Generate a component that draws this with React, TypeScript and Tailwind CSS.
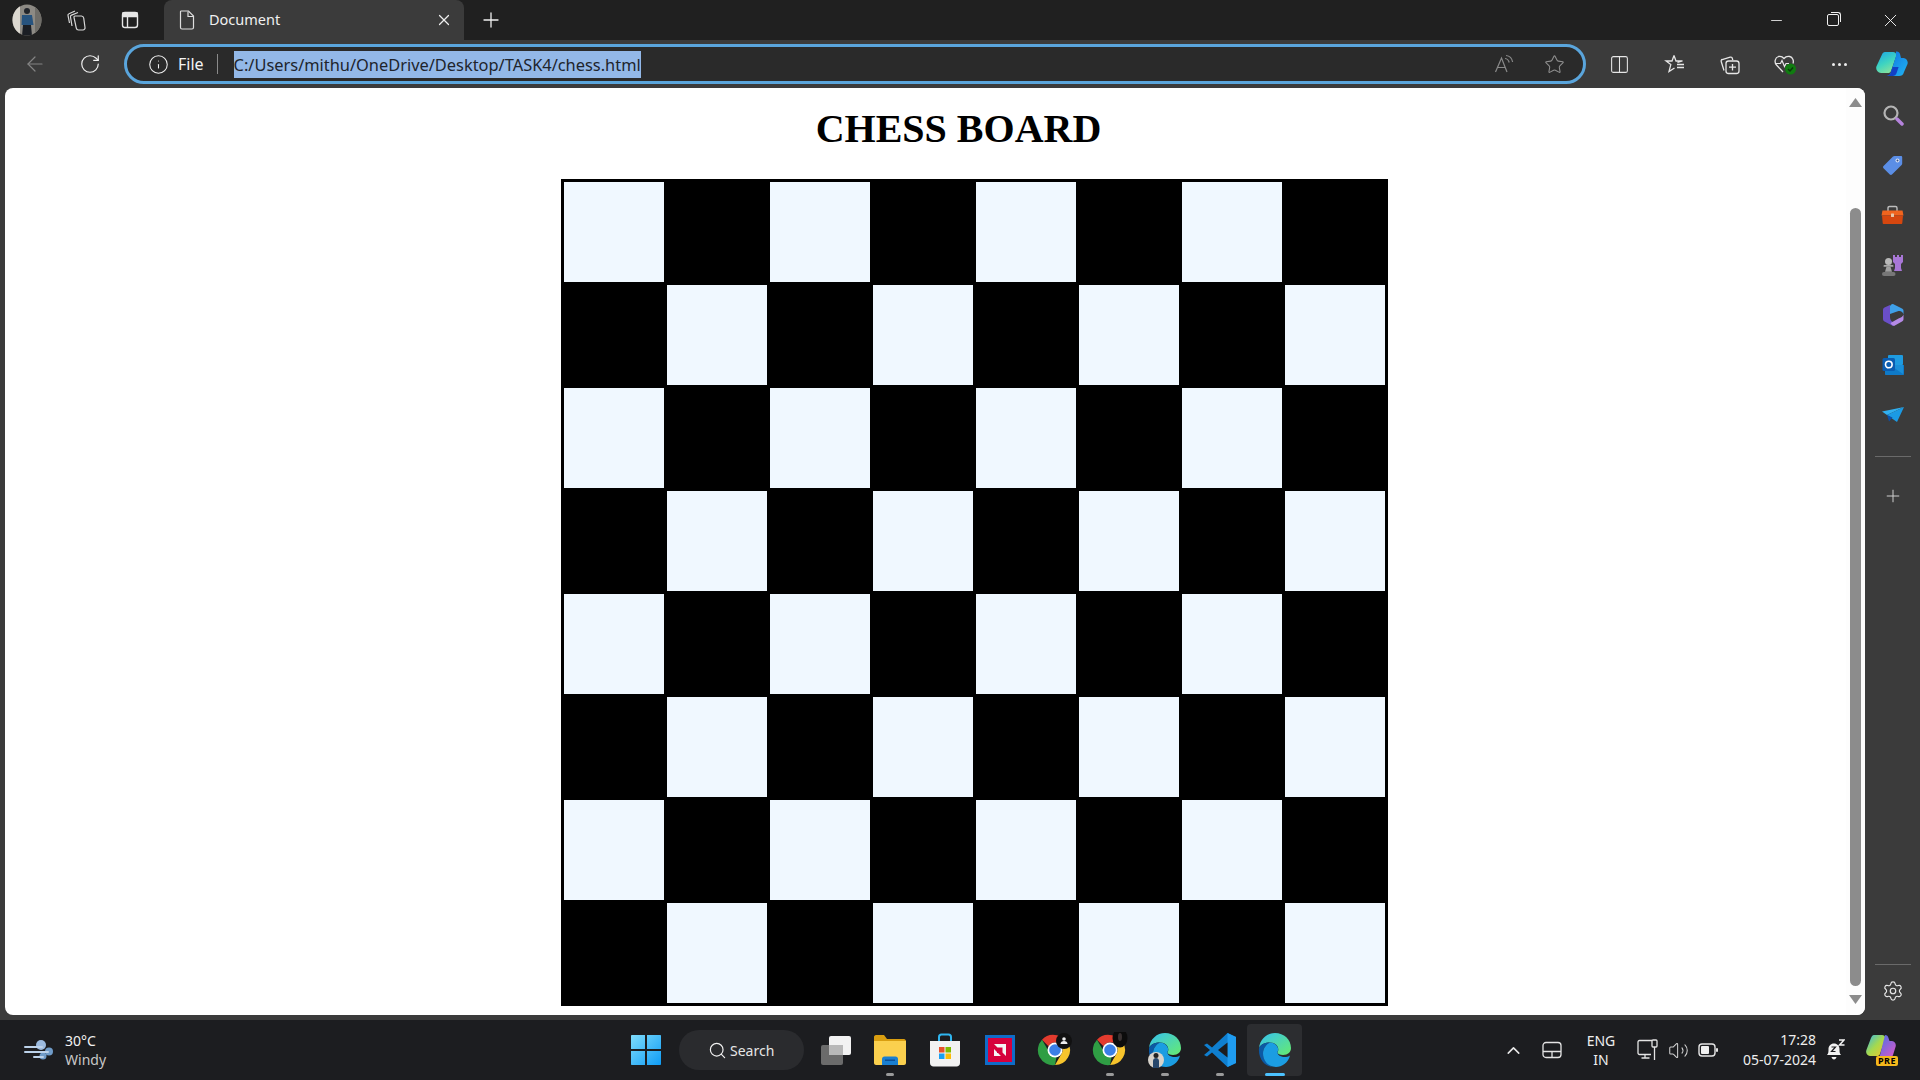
import { ReactNode } from "react";
import { Search, X, Plus, Minus, ArrowLeft, RotateCw, Info, Star, Columns2, Settings, ChevronUp, Volume2 } from "lucide-react";

const rows = [0, 1, 2, 3, 4, 5, 6, 7];

function Slot({ className, children }: { className: string; children?: ReactNode }) {
  return <div className={`flex shrink-0 items-center justify-center ${className}`}>{children}</div>;
}

function Avatar() {
  return (
    <svg width="30" height="32" viewBox="0 0 30 32">
      <defs>
        <clipPath id="av"><ellipse cx="15" cy="16" rx="14.500" ry="15.500" /></clipPath>
      </defs>
      <g clipPath="url(#av)">
        <rect width="30" height="32" fill="#8d8a84" />
        <rect x="0" y="0" width="8" height="32" fill="#dcd8d0" />
        <rect x="23" y="0" width="7" height="32" fill="#6f6d68" />
        <circle cx="15" cy="7" r="3" fill="#22252b" />
        <path d="M10 11h10l1.500 10h-12z" fill="#27537e" />
        <path d="M11 21h8l1 11h-10z" fill="#1b1e24" />
      </g>
    </svg>
  );
}

function Workspaces() {
  return (
    <svg width="22" height="24" viewBox="0 0 22 24" fill="none" stroke="#d8d8d8" strokeWidth="1.200">
      <path d="M3.500 15 2 7.500c-.2-.8.2-1.500 1-1.800L9 3" />
      <path d="M6 18 4.500 9c-.2-.9.2-1.600 1-1.900L12 4.500" />
      <path d="M9 8h6.500c1.200 0 2 .8 2.200 2l1.300 9.500c.2 1.300-.7 2.500-2 2.500h-4.500c-1.100 0-2-.7-2.200-1.800L8 9.500C7.900 8.600 8.300 8 9 8z" />
    </svg>
  );
}

function VerticalTabs() {
  return (
    <svg width="20" height="20" viewBox="0 0 20 20" fill="none" stroke="#e6e6e6" strokeWidth="1.400">
      <rect x="2.500" y="2.500" width="15" height="15" rx="2.500" />
      <path d="M3 3h14v3.500H3z" fill="#e6e6e6" />
      <path d="M7.500 6.500v11" />
    </svg>
  );
}

function FileIcon() {
  return (
    <svg width="18" height="22" viewBox="0 0 18 22" fill="none" stroke="#dedede" strokeWidth="1.200">
      <path d="M3 2h7.500L15.500 7v11.500c0 .9-.7 1.500-1.500 1.500H4c-.9 0-1.500-.6-1.500-1.500V3C2.500 2.400 2.600 2 3 2z" />
      <path d="M10 2.500V7.500h5.500" />
    </svg>
  );
}

function ReadAloud() {
  return (
    <svg width="22" height="20" viewBox="0 0 22 20" fill="none" stroke="#8a8a8a" strokeWidth="1.200">
      <path d="M1.500 18 7.500 4l5.500 14M3.500 13.500h8" />
      <path d="M11 4.500c2.200.3 3.700 1.700 4.200 4M12 1.500c3.500.4 6 3 6.600 6.500" />
    </svg>
  );
}

function Favorites() {
  return (
    <svg width="22" height="22" viewBox="0 0 22 22" fill="none" stroke="#e6e6e6" strokeWidth="1.300">
      <path d="M10 2.500 12 8h6.500l-5 1.500M10 2.500 8 8H2l4.800 3.600L5 18.500l5.500-3.500" />
      <path d="M13 11.500h7M13 14.500h7" />
    </svg>
  );
}

function Collections() {
  return (
    <svg width="22" height="22" viewBox="0 0 22 22" fill="none" stroke="#e6e6e6" strokeWidth="1.300">
      <path d="M5 17.500 2.200 8.500c-.3-1 .2-1.800 1-2l8-2.300c1-.3 1.800.2 2.100 1.200l.5 1.800" />
      <rect x="7" y="8" width="13" height="12.500" rx="2.500" fill="#3b3b3b" />
      <path d="M13.500 11v6.500M10 14.200h7" />
    </svg>
  );
}

function Health() {
  return (
    <svg width="24" height="24" viewBox="0 0 24 24" fill="none">
      <path d="M10 20 3.500 13C1 10.200 2 5.500 5.500 4.500c2-.5 4 .2 5.500 2 1.500-1.800 3.700-2.500 5.700-2 3 .8 4.300 4 3.300 7" stroke="#e6e6e6" strokeWidth="1.300" />
      <path d="M3 11.500h4.500l1.500-3 2.500 6 1.500-3h3" stroke="#e6e6e6" strokeWidth="1.200" />
      <circle cx="17.500" cy="17" r="5.500" fill="#107c10" />
      <path d="m15 17 2 2 3-3.500" stroke="#0b3a0b" strokeWidth="1.500" />
    </svg>
  );
}

function Copilot() {
  return (
    <svg width="32" height="28" viewBox="0 0 32 28">
      <defs>
        <linearGradient id="cpa" x1="0" y1="0" x2="0.500" y2="1">
          <stop offset="0" stopColor="#1aa3e8" />
          <stop offset="0.600" stopColor="#3fd4c0" />
          <stop offset="1" stopColor="#7fe0a0" />
        </linearGradient>
        <linearGradient id="cpb" x1="0" y1="0" x2="1" y2="1">
          <stop offset="0" stopColor="#0f6fe0" />
          <stop offset="1" stopColor="#21b5f2" />
        </linearGradient>
      </defs>
      <path d="M9 2h8c2 0 3 1 3.600 3L15 21c-.6 1.500-1.500 2-3 2H5c-3.500-.6-5.500-3.500-4.600-6.500L6 4.500C6.500 3 7.500 2 9 2z" fill="url(#cpa)" />
      <path d="M20 1.500c2-.4 3.500.7 4 2.500l1 4h2.500c3 .4 4.800 3 4 6L28 22c-.8 3-2.500 4-5 4H11c1.500-.3 3-1 3.600-3L20 6z" fill="url(#cpb)" />
      <path d="M10 26c2 0 4-1 4.600-3l2-6h6l-2 6c-.6 2-2 3-4 3z" fill="#1240c4" />
    </svg>
  );
}

function Magnifier() {
  return (
    <svg width="22" height="22" viewBox="0 0 22 22" fill="none">
      <circle cx="9" cy="9" r="6.500" stroke="#b4b4b4" strokeWidth="2.200" />
      <path d="m15 15 5 5" stroke="#b583dd" strokeWidth="3.500" strokeLinecap="round" />
    </svg>
  );
}

function TagIcon() {
  return (
    <svg width="22" height="22" viewBox="0 0 22 22">
      <path d="M1.500 12 11 2.500c.4-.4 1-.6 1.500-.6H19c.7 0 1.200.5 1.200 1.200v6.500c0 .6-.2 1.100-.6 1.500L10 20.500c-.6.600-1.600.600-2.200 0L1.500 14.200c-.6-.6-.6-1.600 0-2.200z" fill="#5b8ee6" />
      <circle cx="15.500" cy="6.500" r="2" fill="#dfe8f8" />
      <circle cx="15.500" cy="6.500" r="1" fill="#37518a" />
    </svg>
  );
}

function Toolbox() {
  return (
    <svg width="23" height="20" viewBox="0 0 23 20">
      <path d="M7 6V3c0-1 .6-1.500 1.500-1.500h6c.9 0 1.500.5 1.500 1.500v3" fill="none" stroke="#bdbdbd" strokeWidth="1.400" />
      <path d="M1.500 5.500h20l1 5H.500z" fill="#f0641e" />
      <path d="M1 10.500h21l-.7 7.500c0 .6-.5 1-1.100 1H2.800c-.6 0-1.100-.4-1.100-1z" fill="#d6470f" />
      <rect x="10" y="8.500" width="3" height="3.500" rx="0.500" fill="#e6c6a8" />
    </svg>
  );
}

function ChessPieces() {
  return (
    <svg width="24" height="24" viewBox="0 0 24 24">
      <path d="M12 2h2v2h2V2h2v2h2V2h2v7l-2 2v4l1 3H13l1-3v-4l-2-2z" fill="#a877d6" />
      <circle cx="7.500" cy="8.500" r="3.500" fill="#b8b8b8" />
      <rect x="2.500" y="12" width="10" height="1.800" rx="0.900" fill="#a8a8a8" />
      <path d="M5.500 13.800h4l1.500 5H4z" fill="#a0a0a0" />
      <rect x="1" y="19" width="13.500" height="4" rx="2" fill="#777" />
    </svg>
  );
}

function M365() {
  return (
    <svg width="22" height="24" viewBox="0 0 22 24">
      <path d="M11 1 20 5.500c1 .6 1.500 1.500 1.500 2.500v3.500c-.6-2.500-2.500-4-5-3.500L8 11V3c1-1.500 2-2.300 3-2z" fill="#3fa0e8" />
      <path d="M1 7c0-1 .5-2 1.500-2.500L8 2v12c0 3 1.500 5 4.500 6L11 23 2.500 18.500C1.500 18 1 17 1 16z" fill="#6a4fc8" />
      <path d="M21.500 11.500V16c0 1-.5 2-1.500 2.500L12 23c-1.500-.6-3-1.500-3.500-3l8-4.500c2.500-1 4.500-2 5-4z" fill="#b58ae6" />
    </svg>
  );
}

function Outlook() {
  return (
    <svg width="22" height="22" viewBox="0 0 22 22">
      <rect x="6" y="1" width="15" height="10" rx="1" fill="#1e9be0" />
      <path d="M3 11h19v9c0 .6-.4 1-1 1H4c-.6 0-1-.4-1-1z" fill="#0f7ac8" />
      <path d="M8 11h13v9z" fill="#1a8fd8" />
      <rect x="0.500" y="4" width="12.500" height="13" rx="1.500" fill="#0a5cb0" />
      <circle cx="6.800" cy="10.500" r="3.300" fill="none" stroke="#fff" strokeWidth="1.600" />
    </svg>
  );
}

function SendIcon() {
  return (
    <svg width="22" height="16" viewBox="0 0 22 16">
      <path d="M0 4.500 22 0 5 8z" fill="#31b0f0" />
      <path d="M5 8 22 0 15 15z" fill="#1b9ae4" />
      <path d="M5 8 7 14.500 10.500 10.500z" fill="#0c4fa8" />
    </svg>
  );
}

function WindIcon() {
  return (
    <svg width="30" height="24" viewBox="0 0 30 24">
      <circle cx="17" cy="7" r="5" fill="#9cbbe0" />
      <circle cx="25" cy="13.500" r="4" fill="#6f9bc8" />
      <circle cx="19" cy="18" r="3.500" fill="#6f9bc8" />
      <path d="M1 9h17M1 14h23M10 19h9" stroke="#bcd2ea" strokeWidth="2" strokeLinecap="round" />
    </svg>
  );
}

function WindowsLogo() {
  return (
    <svg width="30" height="30" viewBox="0 0 30 30">
      <defs>
        <linearGradient id="win" x1="0" y1="0" x2="1" y2="1">
          <stop offset="0" stopColor="#7fdcfb" />
          <stop offset="1" stopColor="#0f9cf5" />
        </linearGradient>
      </defs>
      <path d="M0 1c0-.6.4-1 1-1h13v14H0zM16 0h13c.6 0 1 .4 1 1v13H16zM0 16h14v14H1c-.6 0-1-.4-1-1zM16 16h14v13c0 .6-.4 1-1 1H16z" fill="url(#win)" />
    </svg>
  );
}

function TaskView() {
  return (
    <svg width="32" height="30" viewBox="0 0 32 30">
      <rect x="1" y="10" width="22" height="20" rx="2" fill="#6b6b6b" />
      <rect x="9" y="1" width="22" height="19" rx="2" fill="#f2f2f2" />
      <rect x="9" y="10" width="14" height="10" fill="#b8b8b8" />
    </svg>
  );
}

function Explorer() {
  return (
    <svg width="32" height="30" viewBox="0 0 32 30">
      <path d="M0 2c0-1 .8-2 2-2h8l3 4h17c1 0 2 1 2 2v2H0z" fill="#d99e10" />
      <path d="M0 6h32v22c0 1-1 2-2 2H2c-1 0-2-1-2-2z" fill="#fbd04e" />
      <path d="M8 30v-6c0-1.500 1-2.500 2.500-2.500h11c1.500 0 2.500 1 2.500 2.500v6z" fill="#1a7fd0" />
      <rect x="11" y="24.500" width="10" height="1.500" fill="#0c4f96" />
    </svg>
  );
}

function StoreIcon() {
  return (
    <svg width="30" height="34" viewBox="0 0 30 34">
      <path d="M9 8V4c0-1.500 1-2.500 2.500-2.500h7C20 1.500 21 2.500 21 4v4" fill="none" stroke="#2fb6f0" strokeWidth="2" />
      <path d="M0 8h30v22c0 2-1.500 3.500-3.500 3.500h-23C1.500 33.500 0 32 0 30z" fill="#f2f2f2" />
      <rect x="9" y="14" width="5.500" height="5.500" fill="#e8502a" />
      <rect x="15.500" y="14" width="5.500" height="5.500" fill="#7fba00" />
      <rect x="9" y="20.500" width="5.500" height="5.500" fill="#1a9ff0" />
      <rect x="15.500" y="20.500" width="5.500" height="5.500" fill="#fbbc09" />
    </svg>
  );
}

function AmdIcon() {
  return (
    <svg width="30" height="30" viewBox="0 0 30 30">
      <rect width="30" height="30" fill="#0f6cc8" />
      <rect x="3" y="3" width="24" height="24" fill="#d6003c" />
      <path d="M9 9h12v12l-3.500-3.500V12.500H12.500zM9 21v-7l3 3v1h1l3 3z" fill="#f4f4f4" />
    </svg>
  );
}

function Chrome({ badge }: { badge: "person" | "photo" }) {
  return (
    <svg width="36" height="36" viewBox="0 0 36 36">
      <path d="M18 3a15 15 0 0 1 13 7.500H18a7.500 7.500 0 0 0-6.500 3.800L5 7.800A15 15 0 0 1 18 3z" fill="#e33b2e" />
      <path d="M31 10.500A15 15 0 0 1 18 33l6.500-11.200A7.500 7.500 0 0 0 24.500 14z" fill="#f7c42c" />
      <path d="M5 7.800 11.500 19a7.500 7.500 0 0 0 8.500 3.600L18 33A15 15 0 0 1 5 7.800z" fill="#2f9e44" />
      <circle cx="18" cy="18" r="7.500" fill="#fff" />
      <circle cx="18" cy="18" r="5.800" fill="#3b7fe6" />
      {badge === "person" ? (
        <g>
          <circle cx="27" cy="9" r="8" fill="#111" />
          <circle cx="27" cy="7" r="1.800" fill="#eee" />
          <path d="M23.500 12c0-2 1.500-3 3.500-3s3.500 1 3.500 3z" fill="#eee" />
        </g>
      ) : (
        <g>
          <ellipse cx="28" cy="6" rx="7.500" ry="9.500" fill="#0c0c0c" />
          <ellipse cx="28" cy="5" rx="2" ry="4" fill="#3a3232" />
        </g>
      )}
    </svg>
  );
}

function EdgeLogo({ profile }: { profile?: boolean }) {
  return (
    <svg width="34" height="36" viewBox="0 0 34 36">
      <defs>
        <linearGradient id={profile ? "eg1" : "eg3"} x1="0" y1="0" x2="1" y2="1">
          <stop offset="0" stopColor="#35c1f1" />
          <stop offset="1" stopColor="#66eb6e" />
        </linearGradient>
      </defs>
      <path d="M1 16C2 7 9 1 17 1c9 0 16 6.500 16 15 0 4-3 7-8 7-3 0-5.500-1-5.500-2.500 0-.7.8-1.200.8-3 0-4-3.500-7-7.800-7C7 10.500 3 12 1 16z" fill={`url(#${profile ? "eg1" : "eg3"})`} />
      <path d="M1 16c2-4 6-5.500 11-5.500-4 2-7 6-7 11 0 6 4.500 11 10 13.500C7 35 0 27 1 16z" fill="#0c59a4" />
      <path d="M12 10.500c4.300 0 7.800 3 8.300 7-.5 1.800-.8 2.300-.8 3 0 3 4 4.500 7 4.500 2 0 4-.5 5.500-1.500C30 31 24 35 18 35c-7.500 0-13-6-13-13.500 0-5 3-9 7-11z" fill="#1b9de2" />
      {profile && (
        <g>
          <circle cx="8" cy="28" r="8" fill="#d7d3cb" />
          <path d="M5 36v-7c0-2 1.500-3 3-3s3 1 3 3v7z" fill="#27476b" />
          <circle cx="8" cy="23.500" r="2.500" fill="#222" />
        </g>
      )}
    </svg>
  );
}

function VsCode() {
  return (
    <svg width="32" height="34" viewBox="0 0 32 34">
      <path d="M23.500 0 32 4v26l-8.500 4L8 19.500l-5 4L0 22l6-5-6-5 3-1.500 5 4z" fill="#0f7fd0" />
      <path d="M23.500 0 32 4v26l-8.500 4z" fill="#1f9cf0" />
      <path d="M23.500 9.500v15L14 17z" fill="#1c1c1f" />
    </svg>
  );
}

function Touchpad() {
  return (
    <svg width="20" height="18" viewBox="0 0 20 18" fill="none" stroke="#e4e4e4" strokeWidth="1.300">
      <rect x="1" y="1.500" width="18" height="15" rx="3" />
      <path d="M1 10.500h18M10 10.500v6" />
    </svg>
  );
}

function NetIcon() {
  return (
    <svg width="22" height="22" viewBox="0 0 22 22" fill="none" stroke="#e4e4e4" strokeWidth="1.300">
      <path d="M14 15.500H2.500c-.8 0-1.500-.6-1.500-1.500V3c0-.8.6-1.500 1.500-1.500H15" />
      <path d="M8 15.500v3M4.500 19h8" />
      <rect x="15" y="1" width="5" height="7" rx="1" />
      <path d="M17.500 8v13" />
    </svg>
  );
}

function BatteryIcon() {
  return (
    <svg width="20" height="14" viewBox="0 0 20 14">
      <rect x="1" y="1" width="16" height="12" rx="3" fill="none" stroke="#e4e4e4" strokeWidth="1.400" />
      <rect x="3" y="3" width="8" height="8" rx="1" fill="#f0f0f0" />
      <rect x="18" y="5" width="2" height="4" rx="1" fill="#e4e4e4" />
    </svg>
  );
}

function BellZ() {
  return (
    <svg width="20" height="22" viewBox="0 0 20 22">
      <path d="M2 16c1.500-1.500 1.500-3 1.500-6 0-3 2.200-5.500 5.500-5.500S14.500 7 14.500 10c0 3 0 4.500 1.500 6z" fill="#f2f2f2" />
      <path d="M6.500 18h5c-.3 1.500-1.300 2.500-2.500 2.500S6.800 19.500 6.500 18z" fill="#f2f2f2" />
      <path d="M6.500 8h4l-4 4.500h4" fill="none" stroke="#1c1c1f" strokeWidth="1.200" />
      <path d="M14 1h5l-4.500 5h5" fill="none" stroke="#f2f2f2" strokeWidth="1.500" />
    </svg>
  );
}

function CopilotPre() {
  return (
    <div className="relative h-[32px] w-[30px]">
      <svg width="30" height="26" viewBox="0 0 30 26">
        <defs>
          <linearGradient id="cpp" x1="0" y1="0" x2="1" y2="1">
            <stop offset="0" stopColor="#33b7ea" />
            <stop offset="0.500" stopColor="#a5d94e" />
            <stop offset="1" stopColor="#f0c52c" />
          </linearGradient>
          <linearGradient id="cpq" x1="0" y1="0" x2="1" y2="1">
            <stop offset="0" stopColor="#3a74e8" />
            <stop offset="1" stopColor="#e356c8" />
          </linearGradient>
        </defs>
        <path d="M8 1h8c2 0 3 1 3.500 3L14 20c-.6 1.500-1.500 2-3 2H4C1 21.500-.6 19 .4 16L5 4c.5-1.500 1.500-3 3-3z" fill="url(#cpp)" />
        <path d="M19 1c2 0 3 1 3.500 3l1 3h2.500c3 .4 4.500 3 3.500 6L27 21c-.8 2-2 3-4 3H11c1.500-.3 2.500-1 3-3z" fill="url(#cpq)" />
      </svg>
      <span className="absolute -right-[2px] bottom-0 rounded-[2px] bg-[#f5b81c] px-[2px] text-[9px] font-bold leading-[10px] tracking-[0.5px] text-black">
        PRE
      </span>
    </div>
  );
}

function TitleBar() {
  return (
    <div className="flex h-10 shrink-0 items-center bg-[#202020] text-white">
      <Slot className="w-[54px]"><Avatar /></Slot>
      <Slot className="w-[46px]"><Workspaces /></Slot>
      <Slot className="w-[60px]"><VerticalTabs /></Slot>
      <div className="ml-1 flex h-10 w-[300px] items-center rounded-t-[8px] bg-[#3b3b3b]">
        <Slot className="ml-[9px] w-[28px]"><FileIcon /></Slot>
        <span className="ml-[8px] flex-1 text-[14.5px] text-[#f0f0f0]">Document</span>
        <Slot className="mr-[10px] w-[20px]"><X size={18} strokeWidth={1.6} color="#eeeeee" /></Slot>
      </div>
      <Slot className="w-[54px]"><Plus size={24} strokeWidth={1.3} color="#f0f0f0" /></Slot>
      <div className="flex-1" />
      <Slot className="w-[57px]"><Minus size={17} strokeWidth={1.2} color="#f0f0f0" /></Slot>
      <Slot className="w-[56px]">
        <div className="relative h-[12px] w-[12px] rounded-[2px] border border-[#f0f0f0]">
          <div className="absolute -right-[3px] -top-[3px] h-[10px] w-[10px] rounded-tr-[3px] border-r border-t border-[#f0f0f0]" />
        </div>
      </Slot>
      <Slot className="w-[59px]"><X size={21} strokeWidth={1.1} color="#f0f0f0" /></Slot>
    </div>
  );
}

function ToolBar() {
  return (
    <div className="flex h-12 shrink-0 items-center bg-[#3b3b3b] text-white">
      <Slot className="w-[70px]"><ArrowLeft size={24} strokeWidth={1.2} color="#848484" /></Slot>
      <Slot className="w-[40px]"><RotateCw size={22} strokeWidth={1.3} color="#f0f0f0" /></Slot>
      <div className="ml-[14px] flex h-[40px] w-[1462px] items-center rounded-full border-[3px] border-[#5aa5dc] bg-[#2a2a2a]">
        <Slot className="ml-[20px] w-[22px]"><Info size={21} strokeWidth={1.2} color="#f0f0f0" /></Slot>
        <span className="ml-[9px] text-[16px] text-[#f4f4f4]">File</span>
        <div className="ml-[13px] h-[20px] w-px bg-[#8a8a8a]" />
        <span className="ml-[16px] bg-[#93b8e8] text-[16.4px] leading-[27px] text-[#20242c]">C:/Users/mithu/OneDrive/Desktop/TASK4/chess.html</span>
        <div className="flex-1" />
        <Slot className="mr-[20px] w-[30px]"><ReadAloud /></Slot>
        <Slot className="mr-[15px] w-[28px]"><Star size={21} strokeWidth={1.2} color="#8f8f8f" /></Slot>
      </div>
      <Slot className="w-[66px]"><Columns2 size={21} strokeWidth={1.2} color="#e6e6e6" /></Slot>
      <Slot className="w-[46px]"><Favorites /></Slot>
      <Slot className="w-[64px]"><Collections /></Slot>
      <Slot className="w-[46px]"><Health /></Slot>
      <Slot className="w-[62px] gap-[3px]">
        <span className="h-[3px] w-[3px] rounded-full bg-[#eeeeee]" />
        <span className="h-[3px] w-[3px] rounded-full bg-[#eeeeee]" />
        <span className="h-[3px] w-[3px] rounded-full bg-[#eeeeee]" />
      </Slot>
      <Slot className="w-[44px]"><Copilot /></Slot>
    </div>
  );
}

function Board() {
  return (
    <div className="ml-[556px] grid w-fit grid-cols-[repeat(8,100px)] gap-[3px] bg-black p-[3px]">
      {rows.map((r) =>
        rows.map((c) => (
          <div key={`${r}-${c}`} className={(r + c) % 2 === 0 ? "h-[100px] bg-[#f0f8ff]" : "h-[100px] bg-black"} />
        ))
      )}
    </div>
  );
}

function Scrollbar() {
  return (
    <div className="flex w-[19px] shrink-0 flex-col items-center bg-[#fdfdfd]">
      <svg className="mt-[10px]" width="13" height="9" viewBox="0 0 13 9"><path d="M6.500 0 13 9H0z" fill="#8c8c8c" /></svg>
      <div className="mt-[101px] h-[778px] w-[11px] rounded-full bg-[#8c8c8c]" />
      <svg className="mt-[9px]" width="13" height="9" viewBox="0 0 13 9"><path d="M0 0h13L6.500 9z" fill="#8c8c8c" /></svg>
    </div>
  );
}

function SideBar() {
  return (
    <div className="flex w-[55px] shrink-0 flex-col items-center pt-[2px]">
      <Slot className="h-[50px]"><Magnifier /></Slot>
      <Slot className="h-[50px]"><TagIcon /></Slot>
      <Slot className="h-[50px]"><Toolbox /></Slot>
      <Slot className="h-[50px]"><ChessPieces /></Slot>
      <Slot className="h-[50px]"><M365 /></Slot>
      <Slot className="h-[50px]"><Outlook /></Slot>
      <Slot className="h-[50px]"><SendIcon /></Slot>
      <div className="mt-[16px] h-px w-[36px] bg-[#6a6a6a]" />
      <Slot className="mt-[14px] h-[50px]"><Plus size={20} strokeWidth={1.2} color="#cfcfcf" /></Slot>
      <div className="mt-auto h-px w-[36px] bg-[#6a6a6a]" />
      <Slot className="mt-[2px] h-[48px]"><Settings size={22} strokeWidth={1.3} color="#e6e6e6" /></Slot>
    </div>
  );
}

function TaskBar() {
  return (
    <div className="flex h-[60px] shrink-0 items-center bg-[#1c1d20] text-white">
      <Slot className="ml-[24px] w-[30px]"><WindIcon /></Slot>
      <div className="ml-[11px] w-[100px] text-[14px] leading-[19px]">
        <div className="text-[#f2f2f2]">30°C</div>
        <div className="text-[#c8c8c8]">Windy</div>
      </div>
      <Slot className="ml-[466px] w-[30px]"><WindowsLogo /></Slot>
      <div className="ml-[18px] flex h-[40px] w-[125px] items-center rounded-full bg-[#2a2b2e] pl-[29px]">
        <Search size={19} strokeWidth={1.5} color="#f0f0f0" />
        <span className="ml-[3px] text-[14px] text-[#e6e6e6]">Search</span>
      </div>
      <Slot className="ml-[12px] mr-[6px] w-[40px]"><TaskView /></Slot>
      <TaskIcon running><Explorer /></TaskIcon>
      <TaskIcon><StoreIcon /></TaskIcon>
      <TaskIcon><AmdIcon /></TaskIcon>
      <TaskIcon><Chrome badge="person" /></TaskIcon>
      <TaskIcon running><Chrome badge="photo" /></TaskIcon>
      <TaskIcon running><EdgeLogo profile /></TaskIcon>
      <TaskIcon running><VsCode /></TaskIcon>
      <div className="relative flex h-[52px] w-[55px] items-center justify-center rounded-[4px] bg-[#2c2d30]">
        <EdgeLogo />
        <span className="absolute bottom-0 h-[3px] w-[20px] rounded-full bg-[#4cc2ff]" />
      </div>
      <Slot className="ml-[197px] w-[28px]"><ChevronUp size={21} strokeWidth={1.8} color="#e8e8e8" /></Slot>
      <Slot className="ml-[11px] w-[28px]"><Touchpad /></Slot>
      <div className="ml-[13px] w-[44px] text-center text-[14px] leading-[19px] text-[#eeeeee]">
        <div>ENG</div>
        <div>IN</div>
      </div>
      <Slot className="ml-[11px] w-[28px]"><NetIcon /></Slot>
      <Slot className="ml-[2px] w-[28px]"><Volume2 size={21} strokeWidth={1.2} color="#d0d0d0" /></Slot>
      <Slot className="ml-[4px] w-[24px]"><BatteryIcon /></Slot>
      <div className="w-[96px] text-right text-[14px] leading-[20px] text-[#eeeeee]">
        <div>17:28</div>
        <div>05-07-2024</div>
      </div>
      <Slot className="ml-[8px] w-[22px]"><BellZ /></Slot>
      <Slot className="ml-[19px] w-[32px]"><CopilotPre /></Slot>
    </div>
  );
}

function TaskIcon({ children, running }: { children: ReactNode; running?: boolean }) {
  return (
    <div className="relative flex h-[52px] w-[55px] shrink-0 items-center justify-center">
      {children}
      {running && <span className="absolute bottom-0 h-[3px] w-[8px] rounded-full bg-[#9a9a9a]" />}
    </div>
  );
}

export default function App() {
  return (
    <div className="flex h-screen w-[1920px] flex-col overflow-hidden bg-[#3b3b3b] font-['Noto_Sans',sans-serif]">
      <TitleBar />
      <ToolBar />
      <div className="flex h-[927px] shrink-0">
        <div className="ml-[5px] flex w-[1860px] overflow-hidden rounded-[8px] bg-white">
          <div className="flex-1">
            <h1 className="flex h-[91px] items-center justify-center pb-[10px] pl-[66px] font-['Liberation_Serif',serif] text-[40px] font-bold text-black">
              CHESS BOARD
            </h1>
            <Board />
          </div>
          <Scrollbar />
        </div>
        <SideBar />
      </div>
      <div className="h-[5px] shrink-0" />
      <TaskBar />
    </div>
  );
}
